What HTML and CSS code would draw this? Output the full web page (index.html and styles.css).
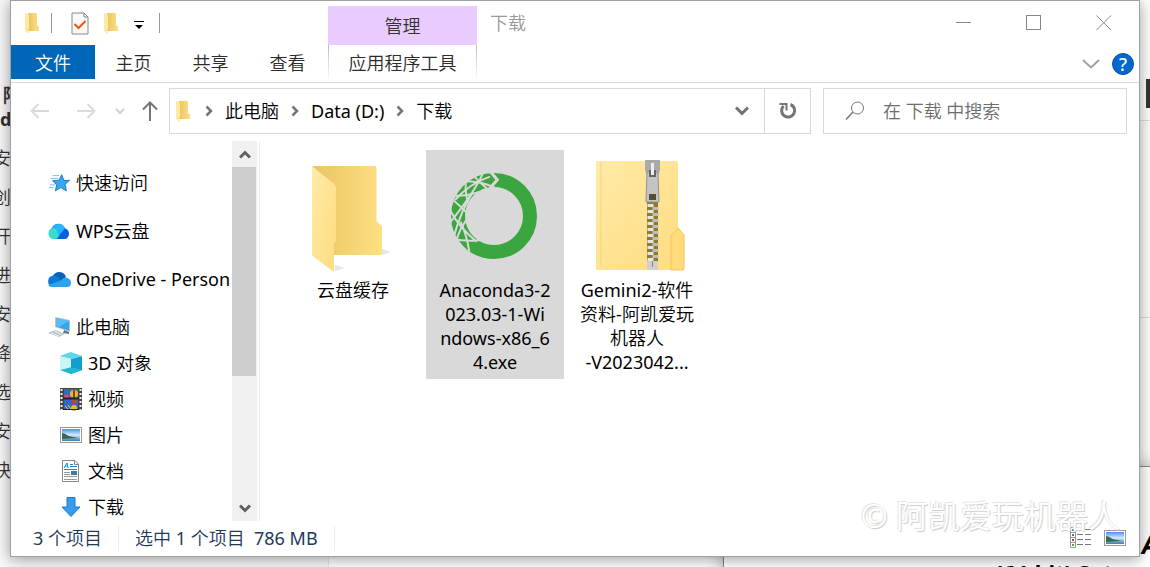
FILE: index.html
```
<!DOCTYPE html>
<html lang="zh-CN">
<head>
  <meta charset="UTF-8">
  <title>下载</title>
  <meta name="viewport" content="width=device-width, initial-scale=1.0">
  <link rel="stylesheet" href="styles.css">
</head>
<body>
  <!-- shared icons -->
  <svg class="defs" width="0" height="0" aria-hidden="true">
    <defs>
      <linearGradient id="folderBack" x1="0" x2="1"><stop offset="0" stop-color="#e8c463"/><stop offset="1" stop-color="#fde083"/></linearGradient>
      <linearGradient id="folderFront" x1="0" x2="1" y1="0" y2="1"><stop offset="0" stop-color="#ffeaa8"/><stop offset="1" stop-color="#ffdc7e"/></linearGradient>
      <linearGradient id="sky" x1="0" x2="0" y1="0" y2="1"><stop offset="0" stop-color="#4c8df0"/><stop offset="0.5" stop-color="#d5ebfa"/><stop offset="1" stop-color="#3c7fae"/></linearGradient>
    </defs>
    <symbol id="folder" viewBox="0 0 16 22">
      <path d="M4 1H13V13L15 14.500V19H4z" fill="url(#folderBack)"/>
      <path d="M1 0.500L5 3V16L4.500 17V22L1 19z" fill="#ffe8a0"/>
    </symbol>
    <symbol id="picture" viewBox="0 0 22 16">
      <rect x="0.500" y="0.500" width="21" height="15" fill="#fff" stroke="#999"/>
      <rect x="2" y="2" width="18" height="12" fill="url(#sky)"/>
      <path d="M2 6C5 6 7 9 11 9.500L18 11L2 12z" fill="#38684d"/>
    </symbol>
    <symbol id="chevron" viewBox="0 0 8 12">
      <path d="M1.500 1.500L6 6L1.500 10.500" fill="none" stroke="#757575" stroke-width="2.500"/>
    </symbol>
  </svg>

  <div class="desktop">
    <div class="page-behind">
      <p class="strong first">阿</p>
      <p class="strong second">d</p>
      <p>安</p>
      <p>创</p>
      <p>开</p>
      <p>进</p>
      <p>安</p>
      <p>降</p>
      <p>选</p>
      <p>安</p>
      <p>快</p>
    </div>
    <div class="side-behind"><span class="block"></span></div>
    <div class="setup-window">
      <em>A</em>
      <strong>(64-bit) Setup</strong>
    </div>

    <main class="window">
      <header class="titlebar">
        <div class="quick">
          <svg class="folder-small" width="16" height="22"><use href="#folder"/></svg>
          <i class="sep"></i>
          <button class="props" aria-label="属性">
            <svg width="18" height="23" viewBox="0 0 18 23">
              <path d="M1 1H13L17 5V22H1z" fill="#f8f8f8" stroke="#888"/>
              <path d="M13 1V5H17" fill="none" stroke="#888"/>
              <path d="M3.500 12L7.500 16L14.500 9" fill="none" stroke="#f0540c" stroke-width="2"/>
            </svg>
          </button>
          <button class="new-folder" aria-label="新建文件夹"><svg width="16" height="22"><use href="#folder"/></svg></button>
          <button class="customize" aria-label="自定义快速访问工具栏">
            <svg width="10" height="8"><path d="M0 0H10V1H0zM1 4H9L5 8z" fill="#000"/></svg>
          </button>
          <i class="sep"></i>
        </div>
        <div class="context-head">管理</div>
        <h1>下载</h1>
        <div class="controls">
          <button aria-label="最小化"><svg width="16" height="16"><path d="M0 7.500H15" stroke="#888"/></svg></button>
          <button aria-label="最大化"><svg width="16" height="16"><rect x="0.500" y="0.500" width="14" height="14" fill="none" stroke="#888"/></svg></button>
          <button aria-label="关闭"><svg width="16" height="16"><path d="M0.500 0.500L15 15M15 0.500L0.500 15" stroke="#888"/></svg></button>
        </div>
      </header>

      <nav class="ribbon">
        <button class="file">文件</button>
        <button>主页</button>
        <button>共享</button>
        <button>查看</button>
        <button class="context-tab">应用程序工具</button>
        <div class="ribbon-end">
          <button aria-label="展开功能区"><svg width="18" height="10"><path d="M1 1L9 8.500L17 1" fill="none" stroke="#a0a0a0" stroke-width="2"/></svg></button>
          <button class="help" aria-label="帮助">?</button>
        </div>
      </nav>

      <div class="toolbar">
        <div class="history">
          <button aria-label="后退"><svg width="20" height="16"><path d="M19 8H2M8.500 1L1.500 8L8.500 15" fill="none" stroke="#dadada" stroke-width="2"/></svg></button>
          <button aria-label="前进"><svg width="20" height="16"><path d="M1 8H18M11.500 1L18.500 8L11.500 15" fill="none" stroke="#dadada" stroke-width="2"/></svg></button>
          <button aria-label="最近位置"><svg width="10" height="7"><path d="M1 1L5 5L9 1" fill="none" stroke="#d0d0d0" stroke-width="2"/></svg></button>
          <button aria-label="上移"><svg width="16" height="20"><path d="M8 20V2M1 8.500L8 1.500L15 8.500" fill="none" stroke="#757575" stroke-width="2"/></svg></button>
        </div>
        <div class="address">
          <svg class="folder-small" width="16" height="22"><use href="#folder"/></svg>
          <svg class="arrow" width="8" height="12"><use href="#chevron"/></svg>
          <a href="#">此电脑</a>
          <svg class="arrow" width="8" height="12"><use href="#chevron"/></svg>
          <a href="#">Data (D:)</a>
          <svg class="arrow" width="8" height="12"><use href="#chevron"/></svg>
          <a href="#">下载</a>
          <button class="drop" aria-label="以前的位置"><svg width="14" height="10"><path d="M1 1.500L7 7.500L13 1.500" fill="none" stroke="#707070" stroke-width="3"/></svg></button>
          <button class="refresh" aria-label="刷新">
            <svg width="18" height="18"><path d="M4.500 4A6.500 6.500 0 1 0 11.500 2.500" fill="none" stroke="#757575" stroke-width="3"/><path d="M0.500 2H7.500V8.500" fill="none" stroke="#757575" stroke-width="2"/></svg>
          </button>
        </div>
        <label class="search">
          <svg width="20" height="20"><circle cx="12.500" cy="7" r="6" fill="none" stroke="#777"/><path d="M8 11L1 18.500" stroke="#777" stroke-width="1.500"/></svg>
          <input type="text" placeholder="在 下载 中搜索" aria-label="搜索">
        </label>
      </div>

      <div class="body">
        <aside class="tree">
          <ul>
            <li>
              <svg width="24" height="24" viewBox="-1 -1 26 26"><path d="M15 3L17.300 9.500L23.500 9L18.500 13.500L20 20.500L14 17L8 20.500L9.500 14L5 9.500L12 9z" fill="#35a7f3" stroke="#1676bd"/><path d="M5 4H12M3 7H11M2 14H8M1 17H6" stroke="#68bdf5"/></svg>
              <a href="#">快速访问</a>
            </li>
            <li>
              <svg width="24" height="24" viewBox="0 0 24 24"><path d="M7 20A6 6 0 0 1 5 9A7 7 0 0 1 18 9.500A5.500 5.500 0 0 1 18 20z" fill="#168bf2"/><circle cx="7" cy="14.500" r="5.500" fill="#35dfc8"/><path d="M6 8A7 7 0 0 1 18 9L11 17C11 12 9 9 6 8z" fill="#27b5fb"/><path d="M10 20L18 9.500A5.500 5.500 0 0 1 18 20z" fill="#085fdc"/></svg>
              <a href="#">WPS云盘</a>
            </li>
            <li>
              <svg width="24" height="24" viewBox="0 0 24 24"><path d="M6 9A7 7 0 0 1 19 10L12 15z" fill="#0863b5"/><path d="M5 20A6 6 0 0 1 6 8.500C10 8 12 11 16 14L7 20z" fill="#0f78d4"/><path d="M15 13C17 9 24 11 24 16Q24 20 20 20H5C3 20 2 19 1.500 18z" fill="#2aa4ea"/></svg>
              <a href="#">OneDrive - Person</a>
            </li>
            <li>
              <svg width="24" height="24" viewBox="0 0 24 24"><path d="M8 2L23 5V17L8 12z" fill="#b9c4cc"/><path d="M9 3L22 6V15.500L9 11.500z" fill="#30a7f4"/><path d="M9 3L22 6L12 12L9 11z" fill="#58bcf8"/><path d="M17 15L22 17V19L16 18z" fill="#667681"/><path d="M1 18L8 15L18 19L12 22z" fill="#b7c1c9"/><path d="M4 18L12 21M7 16L15 20" stroke="#f0f3f5"/></svg>
              <a href="#">此电脑</a>
              <ul>
                <li>
                  <svg width="24" height="24" viewBox="0 0 24 24"><path d="M1 5L12 1V23L1 19z" fill="#a9edf0"/><path d="M12 8L23 5V19L12 23z" fill="#0e9ed0"/><path d="M1 5L12 1L23 5L12 8z" fill="#63d5e5"/><path d="M1 19L12 16L12 23zM12 16L23 19L12 23z" fill="#22b6d0"/><path d="M1 5L12 8V16L1 19z" fill="#c9f5f4"/></svg>
                  <a href="#">3D 对象</a>
                </li>
                <li>
                  <svg width="24" height="24" viewBox="0 0 24 24"><path d="M1 1H23V23H1z" fill="#444"/><path d="M2.500 2V23M21.500 2V23" stroke="#eee" stroke-width="2" stroke-dasharray="2 2"/><path d="M5 2H19V22H5z" fill="#3468c8"/><circle cx="15" cy="7" r="4" fill="#efb727"/><path d="M14 3H16V11H14z" fill="#8f3d24"/><path d="M5 9L8 7L11 11H5z" fill="#e94376"/><path d="M4 11.500H20" stroke="#222" stroke-width="2"/><path d="M13 13H18L16 17H14z" fill="#d93c22"/><circle cx="15" cy="21" r="3" fill="#efb727"/><path d="M6 19L9 22M9 18L12 22" stroke="#ffbf30"/><path d="M4 22.500H20" stroke="#222"/></svg>
                  <a href="#">视频</a>
                </li>
                <li>
                  <svg width="24" height="24" viewBox="0 0 24 24"><use href="#picture" x="1" y="4" width="22" height="16"/></svg>
                  <a href="#">图片</a>
                </li>
                <li>
                  <svg width="24" height="24" viewBox="0 0 24 24"><path d="M3.500 1.500H16L19.500 5V22.500H3.500z" fill="#fff" stroke="#888"/><path d="M15.500 1.500V5.500H19.500" fill="none" stroke="#888"/><path d="M5 9L8 4L9 9M6 7H9M11 5.500H14M11 7.500H18M5 10.500H18" fill="none" stroke="#1689dc"/><path d="M5 13.500H11M5 15.500H11M5 17.500H18M5 20.500H18" stroke="#999"/><path d="M12 12H18V16H12z" fill="#347fa9"/></svg>
                  <a href="#">文档</a>
                </li>
                <li>
                  <svg width="24" height="24" viewBox="0 0 24 24"><path d="M8 2.500H16V12H21L12 21.500L3 12H8z" fill="#379cec" stroke="#1d7bc9"/></svg>
                  <a href="#">下载</a>
                </li>
              </ul>
            </li>
          </ul>
        </aside>
        <div class="scrollbar">
          <button aria-label="向上滚动"><svg width="12" height="9"><path d="M1 7.500L6 2.500L11 7.500" fill="none" stroke="#606060" stroke-width="3"/></svg></button>
          <span class="thumb"></span>
          <button aria-label="向下滚动"><svg width="12" height="9"><path d="M1 1.500L6 6.500L11 1.500" fill="none" stroke="#606060" stroke-width="3"/></svg></button>
        </div>

        <section class="files">
          <figure>
            <svg width="128" height="128" viewBox="0 0 128 128">
              <path d="M93 105L102 102L93 99zM46 121L56 118L46 115z" fill="#e6e6e6"/>
              <path d="M23 16H86Q87.500 16 87.500 18V71L93 76V103Q93 105 91 105H45V36z" fill="url(#folderBack)"/>
              <path d="M23 16L45 34Q47 36 47 38V91L45 94V122L25 107Q23 106 23 104z" fill="url(#folderFront)"/>
            </svg>
            <figcaption>云盘缓存</figcaption>
          </figure>
          <figure class="selected">
            <svg width="128" height="128" viewBox="0 0 128 128">
              <circle cx="63" cy="66" r="36" fill="none" stroke="#3ba63f" stroke-width="14"/>
              <g transform="translate(-141 -5) scale(0.3333)" fill="none" stroke="#d9d9d9" stroke-width="6">
                <path d="M600 95Q540 115 495 165M580 82Q555 140 478 235M550 140Q515 190 490 280M545 205Q505 250 498 295"/>
                <path d="M515 110Q560 105 615 128M545 85Q565 110 590 130M485 152Q530 155 570 140M488 165Q510 180 540 215M480 195Q505 245 560 290M490 283Q530 290 575 285M530 95Q522 130 534 175M512 230Q530 270 538 320"/>
                <path d="M603 82L622 104L600 130" stroke-width="9"/>
              </g>
            </svg>
            <figcaption>Anaconda3-2<br>023.03-1-Wi<br>ndows-x86_6<br>4.exe</figcaption>
          </figure>
          <figure>
            <svg width="128" height="128" viewBox="0 0 128 128">
              <path d="M23 11H103Q105 11 105 13V78L111 85V118Q111 120 109 120H23z" fill="url(#folderFront)"/>
              <path d="M98 120V86L105 78L111 85V118Q111 120 109 120z" fill="#ffdc78" stroke="#edc45f"/>
              <path d="M28 12V116" stroke="#f3d578"/>
              <path d="M74 52H85V112H74z" fill="#8c7a30"/>
              <path d="M77.500 54V112" stroke="#e5e5e5" stroke-width="6" stroke-dasharray="3 3"/>
              <path d="M82.500 57V112" stroke="#bdbdbd" stroke-width="6" stroke-dasharray="3 3"/>
              <path d="M72 10H87V20L84 28H75L72 20z" fill="#aaa"/>
              <path d="M74 22H85L86 52H73z" fill="#c4c4c4" stroke="#929292"/>
              <path d="M76 20H83V27H76z" fill="#666"/>
              <path d="M78 13H81V25H78z" fill="#eee"/>
              <path d="M76 44H83V50H76z" fill="#55512f"/>
              <path d="M74 111H85V120H74z" fill="#d0d0d0"/>
              <path d="M79.500 111V117" stroke="#888"/>
            </svg>
            <figcaption>Gemini2-软件<br>资料-阿凯爱玩<br>机器人<br>-V2023042...</figcaption>
          </figure>
        </section>
      </div>

      <footer class="status">
        <span>3 个项目</span>
        <span>选中 1 个项目&nbsp; 786 MB</span>
        <div class="views">
          <button aria-label="详细信息">
            <svg width="22" height="22"><path d="M0.500 0.500H5.500V20.500H0.500zM0.500 5.500H5.500M0.500 10.500H5.500M0.500 15.500H5.500" fill="#fff" stroke="#999"/><path d="M7 2.500H13M15 2.500H21M7 7.500H13M15 7.500H21M7 12.500H13M15 12.500H21M7 17.500H13M15 17.500H21" stroke="#777"/><path d="M2 2H4V4H2z" fill="#3c6ca0"/><path d="M2 7H4V9H2z" fill="#5470b8"/><path d="M2 12H4V14H2z" fill="#c83b2d"/><path d="M2 17H4V19H2z" fill="#68a052"/></svg>
          </button>
          <button aria-label="大图标"><svg width="22" height="16"><use href="#picture"/></svg></button>
        </div>
      </footer>
    </main>
    <div class="watermark">© 阿凯爱玩机器人</div>
  </div>
</body>
</html>
```

FILE: styles.css
```
* {
  box-sizing: border-box;
}
body {
  margin: 0;
  font-family: "Noto Sans", "Noto Sans CJK SC DemiLight", "Noto Sans CJK SC", sans-serif;
  font-size: 18px;
  font-weight: 400;
  line-height: 24px;
  color: #000;
}
button {
  display: flex;
  align-items: center;
  justify-content: center;
  padding: 0;
  border: none;
  background: none;
  font: inherit;
  color: inherit;
}
a {
  color: inherit;
  text-decoration: none;
}
svg {
  display: block;
  flex: none;
}
.defs {
  position: absolute;
}
.desktop {
  position: relative;
  height: 100vh;
  overflow: hidden;
  background: #fff;
}

/* things behind the window */
.page-behind {
  width: 329px;
  height: 100%;
  padding-top: 83px;
  background: #f8f8f8;
  border-right: 1px solid #e8e8e8;
  color: #333;
}
.page-behind p {
  margin: 0 0 15px -7px;
}
.page-behind .strong {
  font-weight: bold;
}
.page-behind .first {
  margin: 0 0 0 3px;
}
.page-behind .second {
  margin: 0 0 15px;
}
.side-behind {
  position: absolute;
  top: 0;
  right: 0;
  width: 20px;
  height: 318px;
  border-bottom: 1px solid #ddd;
  background: linear-gradient(#fff 120px, #ddd 120px, #ddd 121px, #fdfdfd 121px);
}
.side-behind .block {
  position: absolute;
  top: 79px;
  right: 0;
  width: 4px;
  height: 29px;
  background: #333;
}
.setup-window {
  position: absolute;
  top: 466px;
  right: -200px;
  bottom: -100px;
  left: 723px;
  border: 1px solid #888;
  background: #fff;
  box-shadow: 0 0 16px rgba(0, 0, 0, 0.3);
  font-size: 22px;
}
.setup-window em {
  position: absolute;
  top: 65px;
  left: 418px;
  font-size: 26px;
  font-weight: bold;
}
.setup-window strong {
  position: absolute;
  top: 93px;
  left: 271px;
}

.window {
  position: absolute;
  top: 0;
  right: 10px;
  bottom: 10px;
  left: 10px;
  display: flex;
  flex-direction: column;
  border: 1px solid #a0a0a0;
  background: #fff;
  box-shadow: 0 2px 14px rgba(0, 0, 0, 0.4);
}

/* title bar */
.titlebar {
  display: flex;
  height: 44px;
}
.quick {
  display: flex;
  align-items: center;
  width: 317px;
  padding-left: 13px;
}
.sep {
  width: 1px;
  height: 20px;
  margin-left: 11px;
  background: #999;
}
.props {
  margin-left: 19px;
}
.new-folder {
  margin-left: 14px;
}
.customize {
  margin: 4px 4px 0 15px;
}
.context-head {
  width: 149px;
  margin-top: 5px;
  background: #eacbfd;
  color: #333;
  line-height: 40px;
  text-align: center;
}
h1 {
  margin: 10px 0 0 13px;
  color: #999;
  font-size: 18px;
  font-weight: inherit;
  line-height: 24px;
}
.controls {
  display: flex;
  margin-left: auto;
}
.controls button {
  width: 70px;
}

/* ribbon tabs */
.ribbon {
  display: flex;
  height: 38px;
  border-bottom: 1px solid #dadada;
  color: #2b2b2b;
}
.ribbon button {
  width: 77px;
  height: 34px;
  padding-top: 1px;
}
.ribbon .file {
  width: 84px;
  background: #0067b8;
  color: #fff;
}
.ribbon .context-tab {
  width: 149px;
  margin-left: 2px;
  border: 1px solid;
  border-width: 0 1px;
  border-image: linear-gradient(#bbb, #fff) 1;
}
.ribbon-end {
  display: flex;
  align-items: center;
  gap: 12px;
  margin-left: auto;
  padding-right: 5px;
}
.ribbon-end button {
  width: auto;
  padding: 0;
}
.ribbon .help {
  width: 22px;
  height: 22px;
  border: 1px solid #084d94;
  border-radius: 50%;
  background: #0069d0;
  color: #fff;
  font-weight: 500;
}

/* address row */
.toolbar {
  display: flex;
  gap: 12px;
  height: 58px;
  padding: 5px 12px 7px 19px;
}
.history {
  display: flex;
  align-items: center;
  width: 127px;
}
.history button {
  margin-right: 26px;
}
.history button:nth-child(2) {
  margin-right: 19px;
}
.history button:nth-child(3) {
  margin-right: 17px;
}
.history button:last-child {
  margin-right: 0;
}
.address {
  display: flex;
  flex: 1;
  align-items: center;
  border: 1px solid #d9d9d9;
}
.address .folder-small {
  margin: 0 2px 0 5px;
}
.address .arrow {
  margin: 0 12px;
}
.address .drop {
  width: 44px;
  height: 100%;
  margin-left: auto;
}
.address .refresh {
  width: 46px;
  height: 100%;
  border-left: 1px solid #d9d9d9;
}
.search {
  display: flex;
  align-items: center;
  width: 304px;
  padding-left: 21px;
  border: 1px solid #d9d9d9;
}
.search input {
  width: 200px;
  margin-left: 18px;
  padding: 0;
  border: none;
  outline: none;
  font: inherit;
}
.search input::placeholder {
  color: #6d6d6d;
  opacity: 1;
}

/* main area */
.body {
  display: flex;
  flex: 1;
  min-height: 0;
}
.tree {
  width: 221px;
  padding-top: 12px;
  overflow: hidden;
}
.tree ul {
  margin: 0;
  padding: 0;
  list-style: none;
}
.tree li {
  display: flex;
  flex-wrap: wrap;
  align-items: center;
  margin-top: 12px;
  padding-left: 36px;
  line-height: 36px;
}
.tree li a {
  flex: 1;
  min-width: 0;
  margin-left: 5px;
  white-space: nowrap;
}
.tree li ul {
  width: 100%;
}
.tree li li {
  margin: 0;
  padding-left: 12px;
}
.scrollbar {
  display: flex;
  flex-direction: column;
  width: 25px;
  background: #f0f0f0;
}
.scrollbar button {
  height: 26px;
}
.scrollbar .thumb {
  height: 55%;
  margin: 0 1px 0 0;
  background: #cdcdcd;
}
.scrollbar button:last-child {
  margin-top: auto;
}
.files {
  display: flex;
  flex: 1;
  align-items: flex-start;
  gap: 4px;
  margin-left: 2px;
  padding: 9px 0 0 24px;
  border-left: 1px solid #eee;
}
figure {
  display: flex;
  flex-direction: column;
  align-items: center;
  width: 138px;
  margin: 0;
  padding-bottom: 5px;
  text-align: center;
}
figure.selected {
  background: #d9d9d9;
}
figcaption {
  white-space: nowrap;
}

.status {
  display: flex;
  align-items: center;
  height: 35px;
  padding: 0 13px 2px 6px;
  color: #1e395b;
}
.status span {
  padding: 0 16px;
  border-right: 1px solid #eee;
}
.views {
  display: flex;
  gap: 12px;
  margin-left: auto;
}
.watermark {
  position: absolute;
  right: 30px;
  bottom: 32px;
  color: #fff;
  font-size: 32px;
  line-height: 38px;
  text-shadow: 1px 1px 1px #ccc, -1px -1px 1px #e4e4e4;
}
```
